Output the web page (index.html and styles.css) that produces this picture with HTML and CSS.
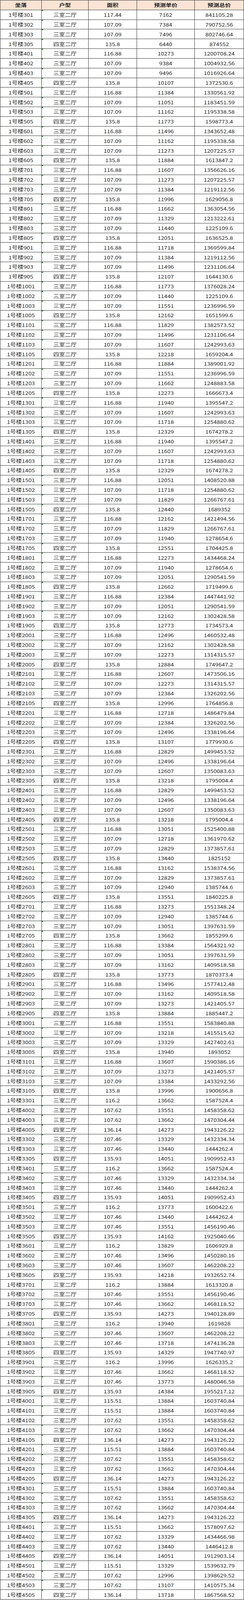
FILE: index.html
```html
<!DOCTYPE html>
<html lang="zh-CN">
<head>
<meta charset="utf-8">
<title>预测价格表</title>
<link rel="stylesheet" href="styles.css">
</head>
<body>
<table class="sheet">
<thead>
<tr><th><span>坐落</span></th><th><span>户型</span></th><th><span>面积</span></th><th><span>预测单价</span></th><th><span>预测总价</span></th></tr>
</thead>
<tbody>
<tr><td><span>1号楼301</span></td><td><span>三室二厅</span></td><td><span>117.44</span></td><td><span>7162</span></td><td><span>841105.28</span></td></tr>
<tr><td><span>1号楼302</span></td><td><span>三室二厅</span></td><td><span>107.09</span></td><td><span>7384</span></td><td><span>790752.56</span></td></tr>
<tr><td><span>1号楼303</span></td><td><span>三室二厅</span></td><td><span>107.09</span></td><td><span>7496</span></td><td><span>802746.64</span></td></tr>
<tr><td><span>1号楼305</span></td><td><span>四室二厅</span></td><td><span>135.8</span></td><td><span>6440</span></td><td><span>874552</span></td></tr>
<tr><td><span>1号楼401</span></td><td><span>三室二厅</span></td><td><span>116.88</span></td><td><span>10273</span></td><td><span>1200708.24</span></td></tr>
<tr><td><span>1号楼402</span></td><td><span>三室二厅</span></td><td><span>107.09</span></td><td><span>9384</span></td><td><span>1004932.56</span></td></tr>
<tr><td><span>1号楼403</span></td><td><span>三室二厅</span></td><td><span>107.09</span></td><td><span>9496</span></td><td><span>1016926.64</span></td></tr>
<tr><td><span>1号楼405</span></td><td><span>四室二厅</span></td><td><span>135.8</span></td><td><span>10107</span></td><td><span>1372530.6</span></td></tr>
<tr><td><span>1号楼501</span></td><td><span>三室二厅</span></td><td><span>116.88</span></td><td><span>11384</span></td><td><span>1330561.92</span></td></tr>
<tr><td><span>1号楼502</span></td><td><span>三室二厅</span></td><td><span>107.09</span></td><td><span>11051</span></td><td><span>1183451.59</span></td></tr>
<tr><td><span>1号楼503</span></td><td><span>三室二厅</span></td><td><span>107.09</span></td><td><span>11162</span></td><td><span>1195338.58</span></td></tr>
<tr><td><span>1号楼505</span></td><td><span>四室二厅</span></td><td><span>135.8</span></td><td><span>11773</span></td><td><span>1598773.4</span></td></tr>
<tr><td><span>1号楼601</span></td><td><span>三室二厅</span></td><td><span>116.88</span></td><td><span>11496</span></td><td><span>1343652.48</span></td></tr>
<tr><td><span>1号楼602</span></td><td><span>三室二厅</span></td><td><span>107.09</span></td><td><span>11162</span></td><td><span>1195338.58</span></td></tr>
<tr><td><span>1号楼603</span></td><td><span>三室二厅</span></td><td><span>107.09</span></td><td><span>11273</span></td><td><span>1207225.57</span></td></tr>
<tr><td><span>1号楼605</span></td><td><span>四室二厅</span></td><td><span>135.8</span></td><td><span>11884</span></td><td><span>1613847.2</span></td></tr>
<tr><td><span>1号楼701</span></td><td><span>三室二厅</span></td><td><span>116.88</span></td><td><span>11607</span></td><td><span>1356626.16</span></td></tr>
<tr><td><span>1号楼702</span></td><td><span>三室二厅</span></td><td><span>107.09</span></td><td><span>11273</span></td><td><span>1207225.57</span></td></tr>
<tr><td><span>1号楼703</span></td><td><span>三室二厅</span></td><td><span>107.09</span></td><td><span>11384</span></td><td><span>1219112.56</span></td></tr>
<tr><td><span>1号楼705</span></td><td><span>四室二厅</span></td><td><span>135.8</span></td><td><span>11996</span></td><td><span>1629056.8</span></td></tr>
<tr><td><span>1号楼801</span></td><td><span>三室二厅</span></td><td><span>116.88</span></td><td><span>11662</span></td><td><span>1363054.56</span></td></tr>
<tr><td><span>1号楼802</span></td><td><span>三室二厅</span></td><td><span>107.09</span></td><td><span>11329</span></td><td><span>1213222.61</span></td></tr>
<tr><td><span>1号楼803</span></td><td><span>三室二厅</span></td><td><span>107.09</span></td><td><span>11440</span></td><td><span>1225109.6</span></td></tr>
<tr><td><span>1号楼805</span></td><td><span>四室二厅</span></td><td><span>135.8</span></td><td><span>12051</span></td><td><span>1636525.8</span></td></tr>
<tr><td><span>1号楼901</span></td><td><span>三室二厅</span></td><td><span>116.88</span></td><td><span>11718</span></td><td><span>1369599.84</span></td></tr>
<tr><td><span>1号楼902</span></td><td><span>三室二厅</span></td><td><span>107.09</span></td><td><span>11384</span></td><td><span>1219112.56</span></td></tr>
<tr><td><span>1号楼903</span></td><td><span>三室二厅</span></td><td><span>107.09</span></td><td><span>11496</span></td><td><span>1231106.64</span></td></tr>
<tr><td><span>1号楼905</span></td><td><span>四室二厅</span></td><td><span>135.8</span></td><td><span>12107</span></td><td><span>1644130.6</span></td></tr>
<tr><td><span>1号楼1001</span></td><td><span>三室二厅</span></td><td><span>116.88</span></td><td><span>11773</span></td><td><span>1376028.24</span></td></tr>
<tr><td><span>1号楼1002</span></td><td><span>三室二厅</span></td><td><span>107.09</span></td><td><span>11440</span></td><td><span>1225109.6</span></td></tr>
<tr><td><span>1号楼1003</span></td><td><span>三室二厅</span></td><td><span>107.09</span></td><td><span>11551</span></td><td><span>1236996.59</span></td></tr>
<tr><td><span>1号楼1005</span></td><td><span>四室二厅</span></td><td><span>135.8</span></td><td><span>12162</span></td><td><span>1651599.6</span></td></tr>
<tr><td><span>1号楼1101</span></td><td><span>三室二厅</span></td><td><span>116.88</span></td><td><span>11829</span></td><td><span>1382573.52</span></td></tr>
<tr><td><span>1号楼1102</span></td><td><span>三室二厅</span></td><td><span>107.09</span></td><td><span>11496</span></td><td><span>1231106.64</span></td></tr>
<tr><td><span>1号楼1103</span></td><td><span>三室二厅</span></td><td><span>107.09</span></td><td><span>11607</span></td><td><span>1242993.63</span></td></tr>
<tr><td><span>1号楼1105</span></td><td><span>四室二厅</span></td><td><span>135.8</span></td><td><span>12218</span></td><td><span>1659204.4</span></td></tr>
<tr><td><span>1号楼1201</span></td><td><span>三室二厅</span></td><td><span>116.88</span></td><td><span>11884</span></td><td><span>1389001.92</span></td></tr>
<tr><td><span>1号楼1202</span></td><td><span>三室二厅</span></td><td><span>107.09</span></td><td><span>11551</span></td><td><span>1236996.59</span></td></tr>
<tr><td><span>1号楼1203</span></td><td><span>三室二厅</span></td><td><span>107.09</span></td><td><span>11662</span></td><td><span>1248883.58</span></td></tr>
<tr><td><span>1号楼1205</span></td><td><span>四室二厅</span></td><td><span>135.8</span></td><td><span>12273</span></td><td><span>1666673.4</span></td></tr>
<tr><td><span>1号楼1301</span></td><td><span>三室二厅</span></td><td><span>116.88</span></td><td><span>11940</span></td><td><span>1395547.2</span></td></tr>
<tr><td><span>1号楼1302</span></td><td><span>三室二厅</span></td><td><span>107.09</span></td><td><span>11607</span></td><td><span>1242993.63</span></td></tr>
<tr><td><span>1号楼1303</span></td><td><span>三室二厅</span></td><td><span>107.09</span></td><td><span>11718</span></td><td><span>1254880.62</span></td></tr>
<tr><td><span>1号楼1305</span></td><td><span>四室二厅</span></td><td><span>135.8</span></td><td><span>12329</span></td><td><span>1674278.2</span></td></tr>
<tr><td><span>1号楼1401</span></td><td><span>三室二厅</span></td><td><span>116.88</span></td><td><span>11940</span></td><td><span>1395547.2</span></td></tr>
<tr><td><span>1号楼1402</span></td><td><span>三室二厅</span></td><td><span>107.09</span></td><td><span>11607</span></td><td><span>1242993.63</span></td></tr>
<tr><td><span>1号楼1403</span></td><td><span>三室二厅</span></td><td><span>107.09</span></td><td><span>11718</span></td><td><span>1254880.62</span></td></tr>
<tr><td><span>1号楼1405</span></td><td><span>四室二厅</span></td><td><span>135.8</span></td><td><span>12329</span></td><td><span>1674278.2</span></td></tr>
<tr><td><span>1号楼1501</span></td><td><span>三室二厅</span></td><td><span>116.88</span></td><td><span>12051</span></td><td><span>1408520.88</span></td></tr>
<tr><td><span>1号楼1502</span></td><td><span>三室二厅</span></td><td><span>107.09</span></td><td><span>11718</span></td><td><span>1254880.62</span></td></tr>
<tr><td><span>1号楼1503</span></td><td><span>三室二厅</span></td><td><span>107.09</span></td><td><span>11829</span></td><td><span>1266767.61</span></td></tr>
<tr><td><span>1号楼1505</span></td><td><span>四室二厅</span></td><td><span>135.8</span></td><td><span>12440</span></td><td><span>1689352</span></td></tr>
<tr><td><span>1号楼1701</span></td><td><span>三室二厅</span></td><td><span>116.88</span></td><td><span>12162</span></td><td><span>1421494.56</span></td></tr>
<tr><td><span>1号楼1702</span></td><td><span>三室二厅</span></td><td><span>107.09</span></td><td><span>11829</span></td><td><span>1266767.61</span></td></tr>
<tr><td><span>1号楼1703</span></td><td><span>三室二厅</span></td><td><span>107.09</span></td><td><span>11940</span></td><td><span>1278654.6</span></td></tr>
<tr><td><span>1号楼1705</span></td><td><span>四室二厅</span></td><td><span>135.8</span></td><td><span>12551</span></td><td><span>1704425.8</span></td></tr>
<tr><td><span>1号楼1801</span></td><td><span>三室二厅</span></td><td><span>116.88</span></td><td><span>12273</span></td><td><span>1434468.24</span></td></tr>
<tr><td><span>1号楼1802</span></td><td><span>三室二厅</span></td><td><span>107.09</span></td><td><span>11940</span></td><td><span>1278654.6</span></td></tr>
<tr><td><span>1号楼1803</span></td><td><span>三室二厅</span></td><td><span>107.09</span></td><td><span>12051</span></td><td><span>1290541.59</span></td></tr>
<tr><td><span>1号楼1805</span></td><td><span>四室二厅</span></td><td><span>135.8</span></td><td><span>12662</span></td><td><span>1719499.6</span></td></tr>
<tr><td><span>1号楼1901</span></td><td><span>三室二厅</span></td><td><span>116.88</span></td><td><span>12384</span></td><td><span>1447441.92</span></td></tr>
<tr><td><span>1号楼1902</span></td><td><span>三室二厅</span></td><td><span>107.09</span></td><td><span>12051</span></td><td><span>1290541.59</span></td></tr>
<tr><td><span>1号楼1903</span></td><td><span>三室二厅</span></td><td><span>107.09</span></td><td><span>12162</span></td><td><span>1302428.58</span></td></tr>
<tr><td><span>1号楼1905</span></td><td><span>四室二厅</span></td><td><span>135.8</span></td><td><span>12773</span></td><td><span>1734573.4</span></td></tr>
<tr><td><span>1号楼2001</span></td><td><span>三室二厅</span></td><td><span>116.88</span></td><td><span>12496</span></td><td><span>1460532.48</span></td></tr>
<tr><td><span>1号楼2002</span></td><td><span>三室二厅</span></td><td><span>107.09</span></td><td><span>12162</span></td><td><span>1302428.58</span></td></tr>
<tr><td><span>1号楼2003</span></td><td><span>三室二厅</span></td><td><span>107.09</span></td><td><span>12273</span></td><td><span>1314315.57</span></td></tr>
<tr><td><span>1号楼2005</span></td><td><span>四室二厅</span></td><td><span>135.8</span></td><td><span>12884</span></td><td><span>1749647.2</span></td></tr>
<tr><td><span>1号楼2101</span></td><td><span>三室二厅</span></td><td><span>116.88</span></td><td><span>12607</span></td><td><span>1473506.16</span></td></tr>
<tr><td><span>1号楼2102</span></td><td><span>三室二厅</span></td><td><span>107.09</span></td><td><span>12273</span></td><td><span>1314315.57</span></td></tr>
<tr><td><span>1号楼2103</span></td><td><span>三室二厅</span></td><td><span>107.09</span></td><td><span>12384</span></td><td><span>1326202.56</span></td></tr>
<tr><td><span>1号楼2105</span></td><td><span>四室二厅</span></td><td><span>135.8</span></td><td><span>12996</span></td><td><span>1764856.8</span></td></tr>
<tr><td><span>1号楼2201</span></td><td><span>三室二厅</span></td><td><span>116.88</span></td><td><span>12718</span></td><td><span>1486479.84</span></td></tr>
<tr><td><span>1号楼2202</span></td><td><span>三室二厅</span></td><td><span>107.09</span></td><td><span>12384</span></td><td><span>1326202.56</span></td></tr>
<tr><td><span>1号楼2203</span></td><td><span>三室二厅</span></td><td><span>107.09</span></td><td><span>12496</span></td><td><span>1338196.64</span></td></tr>
<tr><td><span>1号楼2205</span></td><td><span>四室二厅</span></td><td><span>135.8</span></td><td><span>13107</span></td><td><span>1779930.6</span></td></tr>
<tr><td><span>1号楼2301</span></td><td><span>三室二厅</span></td><td><span>116.88</span></td><td><span>12829</span></td><td><span>1499453.52</span></td></tr>
<tr><td><span>1号楼2302</span></td><td><span>三室二厅</span></td><td><span>107.09</span></td><td><span>12496</span></td><td><span>1338196.64</span></td></tr>
<tr><td><span>1号楼2303</span></td><td><span>三室二厅</span></td><td><span>107.09</span></td><td><span>12607</span></td><td><span>1350083.63</span></td></tr>
<tr><td><span>1号楼2305</span></td><td><span>四室二厅</span></td><td><span>135.8</span></td><td><span>13218</span></td><td><span>1795004.4</span></td></tr>
<tr><td><span>1号楼2401</span></td><td><span>三室二厅</span></td><td><span>116.88</span></td><td><span>12829</span></td><td><span>1499453.52</span></td></tr>
<tr><td><span>1号楼2402</span></td><td><span>三室二厅</span></td><td><span>107.09</span></td><td><span>12496</span></td><td><span>1338196.64</span></td></tr>
<tr><td><span>1号楼2403</span></td><td><span>三室二厅</span></td><td><span>107.09</span></td><td><span>12607</span></td><td><span>1350083.63</span></td></tr>
<tr><td><span>1号楼2405</span></td><td><span>四室二厅</span></td><td><span>135.8</span></td><td><span>13218</span></td><td><span>1795004.4</span></td></tr>
<tr><td><span>1号楼2501</span></td><td><span>三室二厅</span></td><td><span>116.88</span></td><td><span>13051</span></td><td><span>1525400.88</span></td></tr>
<tr><td><span>1号楼2502</span></td><td><span>三室二厅</span></td><td><span>107.09</span></td><td><span>12718</span></td><td><span>1361970.62</span></td></tr>
<tr><td><span>1号楼2503</span></td><td><span>三室二厅</span></td><td><span>107.09</span></td><td><span>12829</span></td><td><span>1373857.61</span></td></tr>
<tr><td><span>1号楼2505</span></td><td><span>四室二厅</span></td><td><span>135.8</span></td><td><span>13440</span></td><td><span>1825152</span></td></tr>
<tr><td><span>1号楼2601</span></td><td><span>三室二厅</span></td><td><span>116.88</span></td><td><span>13162</span></td><td><span>1538374.56</span></td></tr>
<tr><td><span>1号楼2602</span></td><td><span>三室二厅</span></td><td><span>107.09</span></td><td><span>12829</span></td><td><span>1373857.61</span></td></tr>
<tr><td><span>1号楼2603</span></td><td><span>三室二厅</span></td><td><span>107.09</span></td><td><span>12940</span></td><td><span>1385744.6</span></td></tr>
<tr><td><span>1号楼2605</span></td><td><span>四室二厅</span></td><td><span>135.8</span></td><td><span>13551</span></td><td><span>1840225.8</span></td></tr>
<tr><td><span>1号楼2701</span></td><td><span>三室二厅</span></td><td><span>116.88</span></td><td><span>13273</span></td><td><span>1551348.24</span></td></tr>
<tr><td><span>1号楼2702</span></td><td><span>三室二厅</span></td><td><span>107.09</span></td><td><span>12940</span></td><td><span>1385744.6</span></td></tr>
<tr><td><span>1号楼2703</span></td><td><span>三室二厅</span></td><td><span>107.09</span></td><td><span>13051</span></td><td><span>1397631.59</span></td></tr>
<tr><td><span>1号楼2705</span></td><td><span>四室二厅</span></td><td><span>135.8</span></td><td><span>13662</span></td><td><span>1855299.6</span></td></tr>
<tr><td><span>1号楼2801</span></td><td><span>三室二厅</span></td><td><span>116.88</span></td><td><span>13384</span></td><td><span>1564321.92</span></td></tr>
<tr><td><span>1号楼2802</span></td><td><span>三室二厅</span></td><td><span>107.09</span></td><td><span>13051</span></td><td><span>1397631.59</span></td></tr>
<tr><td><span>1号楼2803</span></td><td><span>三室二厅</span></td><td><span>107.09</span></td><td><span>13162</span></td><td><span>1409518.58</span></td></tr>
<tr><td><span>1号楼2805</span></td><td><span>四室二厅</span></td><td><span>135.8</span></td><td><span>13773</span></td><td><span>1870373.4</span></td></tr>
<tr><td><span>1号楼2901</span></td><td><span>三室二厅</span></td><td><span>116.88</span></td><td><span>13496</span></td><td><span>1577412.48</span></td></tr>
<tr><td><span>1号楼2902</span></td><td><span>三室二厅</span></td><td><span>107.09</span></td><td><span>13162</span></td><td><span>1409518.58</span></td></tr>
<tr><td><span>1号楼2903</span></td><td><span>三室二厅</span></td><td><span>107.09</span></td><td><span>13273</span></td><td><span>1421405.57</span></td></tr>
<tr><td><span>1号楼2905</span></td><td><span>四室二厅</span></td><td><span>135.8</span></td><td><span>13884</span></td><td><span>1885447.2</span></td></tr>
<tr><td><span>1号楼3001</span></td><td><span>三室二厅</span></td><td><span>116.88</span></td><td><span>13551</span></td><td><span>1583840.88</span></td></tr>
<tr><td><span>1号楼3002</span></td><td><span>三室二厅</span></td><td><span>107.09</span></td><td><span>13218</span></td><td><span>1415515.62</span></td></tr>
<tr><td><span>1号楼3003</span></td><td><span>三室二厅</span></td><td><span>107.09</span></td><td><span>13329</span></td><td><span>1427402.61</span></td></tr>
<tr><td><span>1号楼3005</span></td><td><span>四室二厅</span></td><td><span>135.8</span></td><td><span>13940</span></td><td><span>1893052</span></td></tr>
<tr><td><span>1号楼3101</span></td><td><span>三室二厅</span></td><td><span>116.88</span></td><td><span>13607</span></td><td><span>1590386.16</span></td></tr>
<tr><td><span>1号楼3102</span></td><td><span>三室二厅</span></td><td><span>107.09</span></td><td><span>13273</span></td><td><span>1421405.57</span></td></tr>
<tr><td><span>1号楼3103</span></td><td><span>三室二厅</span></td><td><span>107.09</span></td><td><span>13384</span></td><td><span>1433292.56</span></td></tr>
<tr><td><span>1号楼3105</span></td><td><span>四室二厅</span></td><td><span>135.8</span></td><td><span>13996</span></td><td><span>1900656.8</span></td></tr>
<tr><td><span>1号楼3301</span></td><td><span>三室二厅</span></td><td><span>116.2</span></td><td><span>13662</span></td><td><span>1587524.4</span></td></tr>
<tr><td><span>1号楼4002</span></td><td><span>三室二厅</span></td><td><span>107.62</span></td><td><span>13551</span></td><td><span>1458358.62</span></td></tr>
<tr><td><span>1号楼4003</span></td><td><span>三室二厅</span></td><td><span>107.62</span></td><td><span>13662</span></td><td><span>1470304.44</span></td></tr>
<tr><td><span>1号楼4005</span></td><td><span>四室二厅</span></td><td><span>136.14</span></td><td><span>14273</span></td><td><span>1943126.22</span></td></tr>
<tr><td><span>1号楼3302</span></td><td><span>三室二厅</span></td><td><span>107.46</span></td><td><span>13329</span></td><td><span>1432334.34</span></td></tr>
<tr><td><span>1号楼3303</span></td><td><span>三室二厅</span></td><td><span>107.46</span></td><td><span>13440</span></td><td><span>1444262.4</span></td></tr>
<tr><td><span>1号楼3305</span></td><td><span>四室二厅</span></td><td><span>135.93</span></td><td><span>14051</span></td><td><span>1909952.43</span></td></tr>
<tr><td><span>1号楼3401</span></td><td><span>三室二厅</span></td><td><span>116.2</span></td><td><span>13662</span></td><td><span>1587524.4</span></td></tr>
<tr><td><span>1号楼3402</span></td><td><span>三室二厅</span></td><td><span>107.46</span></td><td><span>13329</span></td><td><span>1432334.34</span></td></tr>
<tr><td><span>1号楼3403</span></td><td><span>三室二厅</span></td><td><span>107.46</span></td><td><span>13440</span></td><td><span>1444262.4</span></td></tr>
<tr><td><span>1号楼3405</span></td><td><span>四室二厅</span></td><td><span>135.93</span></td><td><span>14051</span></td><td><span>1909952.43</span></td></tr>
<tr><td><span>1号楼3501</span></td><td><span>三室二厅</span></td><td><span>116.2</span></td><td><span>13773</span></td><td><span>1600422.6</span></td></tr>
<tr><td><span>1号楼3502</span></td><td><span>三室二厅</span></td><td><span>107.46</span></td><td><span>13440</span></td><td><span>1444262.4</span></td></tr>
<tr><td><span>1号楼3503</span></td><td><span>三室二厅</span></td><td><span>107.46</span></td><td><span>13551</span></td><td><span>1456190.46</span></td></tr>
<tr><td><span>1号楼3505</span></td><td><span>四室二厅</span></td><td><span>135.93</span></td><td><span>14162</span></td><td><span>1925040.66</span></td></tr>
<tr><td><span>1号楼3601</span></td><td><span>三室二厅</span></td><td><span>116.2</span></td><td><span>13829</span></td><td><span>1606929.8</span></td></tr>
<tr><td><span>1号楼3602</span></td><td><span>三室二厅</span></td><td><span>107.46</span></td><td><span>13496</span></td><td><span>1450280.16</span></td></tr>
<tr><td><span>1号楼3603</span></td><td><span>三室二厅</span></td><td><span>107.46</span></td><td><span>13607</span></td><td><span>1462208.22</span></td></tr>
<tr><td><span>1号楼3605</span></td><td><span>四室二厅</span></td><td><span>135.93</span></td><td><span>14218</span></td><td><span>1932652.74</span></td></tr>
<tr><td><span>1号楼3701</span></td><td><span>三室二厅</span></td><td><span>116.2</span></td><td><span>13884</span></td><td><span>1613320.8</span></td></tr>
<tr><td><span>1号楼3702</span></td><td><span>三室二厅</span></td><td><span>107.46</span></td><td><span>13551</span></td><td><span>1456190.46</span></td></tr>
<tr><td><span>1号楼3703</span></td><td><span>三室二厅</span></td><td><span>107.46</span></td><td><span>13662</span></td><td><span>1468118.52</span></td></tr>
<tr><td><span>1号楼3705</span></td><td><span>四室二厅</span></td><td><span>135.93</span></td><td><span>14273</span></td><td><span>1940128.89</span></td></tr>
<tr><td><span>1号楼3801</span></td><td><span>三室二厅</span></td><td><span>116.2</span></td><td><span>13940</span></td><td><span>1619828</span></td></tr>
<tr><td><span>1号楼3802</span></td><td><span>三室二厅</span></td><td><span>107.46</span></td><td><span>13607</span></td><td><span>1462208.22</span></td></tr>
<tr><td><span>1号楼3803</span></td><td><span>三室二厅</span></td><td><span>107.46</span></td><td><span>13718</span></td><td><span>1474136.28</span></td></tr>
<tr><td><span>1号楼3805</span></td><td><span>四室二厅</span></td><td><span>135.93</span></td><td><span>14329</span></td><td><span>1947740.97</span></td></tr>
<tr><td><span>1号楼3901</span></td><td><span>三室二厅</span></td><td><span>116.2</span></td><td><span>13996</span></td><td><span>1626335.2</span></td></tr>
<tr><td><span>1号楼3902</span></td><td><span>三室二厅</span></td><td><span>107.46</span></td><td><span>13662</span></td><td><span>1468118.52</span></td></tr>
<tr><td><span>1号楼3903</span></td><td><span>三室二厅</span></td><td><span>107.46</span></td><td><span>13773</span></td><td><span>1480046.58</span></td></tr>
<tr><td><span>1号楼3905</span></td><td><span>四室二厅</span></td><td><span>135.93</span></td><td><span>14384</span></td><td><span>1955217.12</span></td></tr>
<tr><td><span>1号楼4001</span></td><td><span>三室二厅</span></td><td><span>115.51</span></td><td><span>13884</span></td><td><span>1603740.84</span></td></tr>
<tr><td><span>1号楼4101</span></td><td><span>三室二厅</span></td><td><span>115.51</span></td><td><span>13884</span></td><td><span>1603740.84</span></td></tr>
<tr><td><span>1号楼4102</span></td><td><span>三室二厅</span></td><td><span>107.62</span></td><td><span>13551</span></td><td><span>1458358.62</span></td></tr>
<tr><td><span>1号楼4103</span></td><td><span>三室二厅</span></td><td><span>107.62</span></td><td><span>13662</span></td><td><span>1470304.44</span></td></tr>
<tr><td><span>1号楼4105</span></td><td><span>四室二厅</span></td><td><span>136.14</span></td><td><span>14273</span></td><td><span>1943126.22</span></td></tr>
<tr><td><span>1号楼4201</span></td><td><span>三室二厅</span></td><td><span>115.51</span></td><td><span>13884</span></td><td><span>1603740.84</span></td></tr>
<tr><td><span>1号楼4202</span></td><td><span>三室二厅</span></td><td><span>107.62</span></td><td><span>13551</span></td><td><span>1458358.62</span></td></tr>
<tr><td><span>1号楼4203</span></td><td><span>三室二厅</span></td><td><span>107.62</span></td><td><span>13662</span></td><td><span>1470304.44</span></td></tr>
<tr><td><span>1号楼4205</span></td><td><span>四室二厅</span></td><td><span>136.14</span></td><td><span>14273</span></td><td><span>1943126.22</span></td></tr>
<tr><td><span>1号楼4301</span></td><td><span>三室二厅</span></td><td><span>115.51</span></td><td><span>13884</span></td><td><span>1603740.84</span></td></tr>
<tr><td><span>1号楼4302</span></td><td><span>三室二厅</span></td><td><span>107.62</span></td><td><span>13551</span></td><td><span>1458358.62</span></td></tr>
<tr><td><span>1号楼4303</span></td><td><span>三室二厅</span></td><td><span>107.62</span></td><td><span>13662</span></td><td><span>1470304.44</span></td></tr>
<tr><td><span>1号楼4305</span></td><td><span>四室二厅</span></td><td><span>136.14</span></td><td><span>14273</span></td><td><span>1943126.22</span></td></tr>
<tr><td><span>1号楼4401</span></td><td><span>三室二厅</span></td><td><span>115.51</span></td><td><span>13662</span></td><td><span>1578097.62</span></td></tr>
<tr><td><span>1号楼4402</span></td><td><span>三室二厅</span></td><td><span>107.62</span></td><td><span>13329</span></td><td><span>1434466.98</span></td></tr>
<tr><td><span>1号楼4403</span></td><td><span>三室二厅</span></td><td><span>107.62</span></td><td><span>13440</span></td><td><span>1446412.8</span></td></tr>
<tr><td><span>1号楼4405</span></td><td><span>四室二厅</span></td><td><span>136.14</span></td><td><span>14051</span></td><td><span>1912903.14</span></td></tr>
<tr><td><span>1号楼4501</span></td><td><span>三室二厅</span></td><td><span>115.51</span></td><td><span>13329</span></td><td><span>1539632.79</span></td></tr>
<tr><td><span>1号楼4502</span></td><td><span>三室二厅</span></td><td><span>107.62</span></td><td><span>12996</span></td><td><span>1398629.52</span></td></tr>
<tr><td><span>1号楼4503</span></td><td><span>三室二厅</span></td><td><span>107.62</span></td><td><span>13107</span></td><td><span>1410575.34</span></td></tr>
<tr><td><span>1号楼4505</span></td><td><span>四室二厅</span></td><td><span>136.14</span></td><td><span>13718</span></td><td><span>1867568.52</span></td></tr>
</tbody>
</table>
</body>
</html>
```
FILE: styles.css
```css
html, body {
  margin: 0;
  padding: 0;
  background: #ffffff;
}

.sheet,
.sheet thead,
.sheet tbody {
  display: block;
}

.sheet {
  width: 625px;
  box-sizing: border-box;
  border-top: 1px solid #383838;
  border-left: 1px solid #383838;
  font-family: "Noto Sans CJK SC", "Liberation Sans", sans-serif;
  font-size: 15px;
  color: #262626;
}

.sheet tr {
  display: grid;
  grid-template-columns: 106px 120px 124px 148px 126px;
  height: 24.818px;
}

.sheet th,
.sheet td {
  display: flex;
  align-items: center;
  justify-content: center;
  box-sizing: border-box;
  height: 24.818px;
  padding: 0;
  border-right: 1px solid #383838;
  border-bottom: 1px solid #383838;
  line-height: 1;
  white-space: nowrap;
  overflow: hidden;
}

.sheet th span,
.sheet td span {
  display: inline-block;
  transform: scaleY(0.8);
}

.sheet th {
  background: #fbe4d5;
  font-weight: bold;
  color: #1c1c1c;
}

.sheet tbody td:nth-child(2) {
  background: linear-gradient(to bottom right, #1f9a1f 50%, transparent 50%) 0 0 / 5px 3px no-repeat;
}
```
